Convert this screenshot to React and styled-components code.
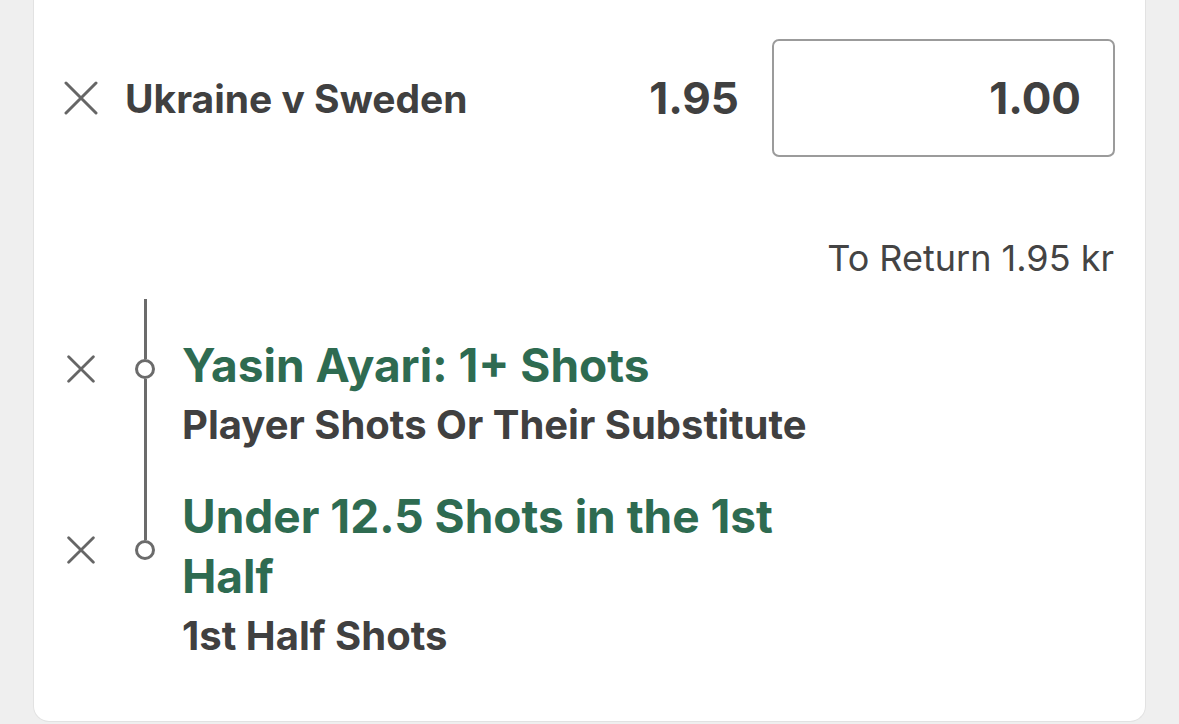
import React from "react";
import styled, { createGlobalStyle } from "styled-components";

const GlobalStyle = createGlobalStyle`
  html, body {
    margin: 0;
    padding: 0;
    background: #efefef;
  }
  body {
    font-family: "Inter", "Liberation Sans", sans-serif;
    color: #404040;
  }
`;

const Page = styled.div`
  width: 1179px;
  height: 724px;
  overflow: hidden;
  padding: 0 33px;
  box-sizing: border-box;
`;

const Card = styled.div`
  background: #ffffff;
  border: 1px solid #e2e2e2;
  border-top: none;
  border-radius: 0 0 16px 16px;
  padding: 39px 30px 60px 30px;
  height: 722px;
  box-sizing: border-box;
`;

const Header = styled.div`
  display: flex;
  align-items: center;
  height: 118px;
`;

const CloseBtn = styled.button`
  border: none;
  background: none;
  padding: 0;
  width: ${(p) => p.size}px;
  height: ${(p) => p.size}px;
  display: flex;
  align-items: center;
  justify-content: center;
  color: #666666;
  cursor: pointer;
`;

const Title = styled.div`
  margin-left: 27px;
  font-size: 39px;
  font-weight: 700;
  color: #404040;
  flex: 1;
`;

const Odds = styled.div`
  font-size: 44px;
  font-weight: 700;
  color: #404040;
  margin-right: 33px;
`;

const Stake = styled.input`
  width: 343px;
  height: 118px;
  box-sizing: border-box;
  border: 2px solid #9b9b9b;
  border-radius: 7px;
  padding: 0 32px;
  text-align: right;
  font-family: "Inter", "Liberation Sans", sans-serif;
  font-size: 44px;
  font-weight: 700;
  color: #404040;
  outline: none;
`;

const Return = styled.div`
  margin-top: 79px;
  text-align: right;
  font-size: 36px;
  line-height: 44px;
  font-weight: 400;
  color: #444444;
  padding-right: 1px;
`;

const Legs = styled.div`
  margin-top: 19px;
`;

const Leg = styled.div`
  display: grid;
  grid-template-columns: 71px 47px 1fr;
  grid-template-rows: 36px auto auto;
`;

const Stem = styled.div`
  grid-column: 2;
  grid-row: ${(p) => p.row};
  width: 20px;
  display: flex;
  justify-content: center;
  &::before {
    content: "";
    width: 3px;
    background: ${(p) => (p.$off ? "transparent" : "#6b6b6b")};
  }
`;

const LegClose = styled.div`
  grid-column: 1;
  grid-row: 2;
  width: 34px;
  padding-top: 7px;
  display: flex;
  align-items: center;
  justify-content: center;
`;

const Node = styled.div`
  grid-column: 2;
  grid-row: 2;
  width: 20px;
  display: flex;
  flex-direction: column;
  align-items: center;
`;

const Segment = styled.div`
  flex: 1 0 ${(p) => p.$base || 0}px;
  width: 3px;
  background: ${(p) => (p.$off ? "transparent" : "#6b6b6b")};
`;

const Dot = styled.div`
  width: 20px;
  height: 20px;
  box-sizing: border-box;
  border: 3px solid #6b6b6b;
  border-radius: 50%;
  background: #fff;
`;

const Selection = styled.div`
  grid-column: 3;
  grid-row: 2;
  max-width: 640px;
  font-size: 46px;
  line-height: 60px;
  font-weight: 700;
  color: #2e6b51;
`;

const Market = styled.div`
  grid-column: 3;
  grid-row: 3;
  margin-top: 5px;
  font-size: 40px;
  line-height: 50px;
  font-weight: 700;
  color: #404040;
`;

const XIcon = ({ size, stroke }) => (
  <svg width={size} height={size} viewBox="0 0 34 34" fill="none">
    <path
      d="M2 2 L32 32 M32 2 L2 32"
      stroke="#666666"
      strokeWidth={stroke}
      strokeLinecap="round"
    />
  </svg>
);

const legs = [
  {
    selection: "Yasin Ayari: 1+ Shots",
    market: "Player Shots Or Their Substitute",
  },
  {
    selection: "Under 12.5 Shots in the 1st Half",
    market: "1st Half Shots",
  },
];

export default function App() {
  return (
    <Page>
      <GlobalStyle />
      <Card>
        <Header>
          <CloseBtn size={34}>
            <XIcon size={34} stroke={3} />
          </CloseBtn>
          <Title>Ukraine v Sweden</Title>
          <Odds>1.95</Odds>
          <Stake defaultValue="1.00" />
        </Header>
        <Return>To Return 1.95 kr</Return>
        <Legs>
          {legs.map((leg, i) => {
            const last = i === legs.length - 1;
            return (
              <Leg key={i}>
                <Stem row={1} />
                <LegClose>
                  <XIcon size={28} stroke={3.4} />
                </LegClose>
                <Node>
                  <Segment $base={7} />
                  <Dot />
                  <Segment $off={last} />
                </Node>
                <Selection>{leg.selection}</Selection>
                <Stem row={3} $off={last} />
                <Market>{leg.market}</Market>
              </Leg>
            );
          })}
        </Legs>
      </Card>
    </Page>
  );
}
